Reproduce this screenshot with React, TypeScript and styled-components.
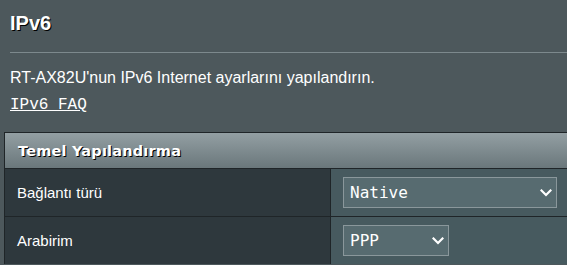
import React from "react";
import styled, { createGlobalStyle } from "styled-components";

const Global = createGlobalStyle`
  html, body {
    margin: 0;
    padding: 0;
    background: #4d585c;
    overflow: hidden;
  }
  body {
    font-family: "Liberation Sans", Arial, sans-serif;
    color: #ffffff;
  }
`;

const Page = styled.div`
  display: flex;
  flex-direction: column;
  width: 567px;
`;

const Intro = styled.div`
  display: flex;
  flex-direction: column;
  padding-left: 10px;
`;

const Title = styled.h1`
  margin: 12px 0 0 0;
  font-family: "Liberation Sans", Arial, sans-serif;
  font-size: 20px;
  line-height: 23px;
  font-weight: bold;
  color: #ffffff;
  text-shadow: 1px 1px 0 #000000;
`;

const SplitLine = styled.div`
  margin-top: 17px;
  height: 1px;
  background: #7d898d;
`;

const Description = styled.p`
  margin: 16px 0 0 0;
  font-size: 16px;
  line-height: 18px;
  color: #ffffff;
`;

const FaqLink = styled.a`
  margin-top: 9px;
  align-self: flex-start;
  font-family: "Liberation Mono", "Courier New", monospace;
  font-size: 16px;
  line-height: 18px;
  color: #ffffff;
  text-decoration: underline;
  cursor: pointer;
`;

const Table = styled.div`
  margin: 18px 0 0 4px;
  display: flex;
  flex-direction: column;
  border-top: 1px solid #1f2528;
  border-left: 1px solid #1f2528;
`;

const HeaderRow = styled.div`
  height: 35px;
  display: flex;
  align-items: center;
  padding-left: 13px;
  background: linear-gradient(to bottom, #939fa3 0%, #6a777b 100%);
  border-bottom: 1px solid #1f2528;
  font-family: "DejaVu Sans", Verdana, sans-serif;
  font-weight: bold;
  font-size: 14.5px;
  letter-spacing: 0.2px;
  text-shadow: 1px 1px 0 #000000;
`;

const Row = styled.div<{ $last?: boolean }>`
  display: grid;
  grid-template-columns: 326px 1fr;
  height: 47px;
  border-bottom: ${(p) => (p.$last ? "none" : "1px solid #1f2528")};
`;

const LabelCell = styled.div`
  display: flex;
  align-items: center;
  padding-left: 12px;
  background: #2e383d;
  border-right: 1px solid #1f2528;
  font-size: 15px;
  color: #ffffff;
`;

const ValueCell = styled.div`
  display: flex;
  align-items: flex-start;
  padding: 8px 0 0 12px;
  background: #475a5f;
`;

const SelectBox = styled.div<{ $width: number }>`
  box-sizing: border-box;
  width: ${(p) => p.$width}px;
  height: 31px;
  display: flex;
  align-items: center;
  justify-content: space-between;
  padding: 0 4px 0 6px;
  background: #576b70;
  border: 1px solid #8a979b;
  font-family: "DejaVu Sans Mono", "Lucida Console", monospace;
  font-size: 16px;
  color: #ffffff;
`;

const Chevron = () => (
  <svg width="12" height="8" viewBox="0 0 12 8" aria-hidden="true">
    <path d="M1.5 1.5 L6 6 L10.5 1.5" fill="none" stroke="#ffffff" strokeWidth="2.2" strokeLinecap="square" />
  </svg>
);

const Select = ({ value, width }: { value: string; width: number }) => (
  <SelectBox $width={width} role="button">
    <span>{value}</span>
    <Chevron />
  </SelectBox>
);

export default function App() {
  return (
    <>
      <Global />
      <Page>
        <Intro>
          <Title>IPv6</Title>
          <SplitLine />
          <Description>RT-AX82U'nun IPv6 Internet ayarlarını yapılandırın.</Description>
          <FaqLink>IPv6 FAQ</FaqLink>
        </Intro>
        <Table>
          <HeaderRow>Temel Yapılandırma</HeaderRow>
          <Row>
            <LabelCell>Bağlantı türü</LabelCell>
            <ValueCell>
              <Select value="Native" width={214} />
            </ValueCell>
          </Row>
          <Row $last>
            <LabelCell>Arabirim</LabelCell>
            <ValueCell>
              <Select value="PPP" width={106} />
            </ValueCell>
          </Row>
        </Table>
      </Page>
    </>
  );
}
